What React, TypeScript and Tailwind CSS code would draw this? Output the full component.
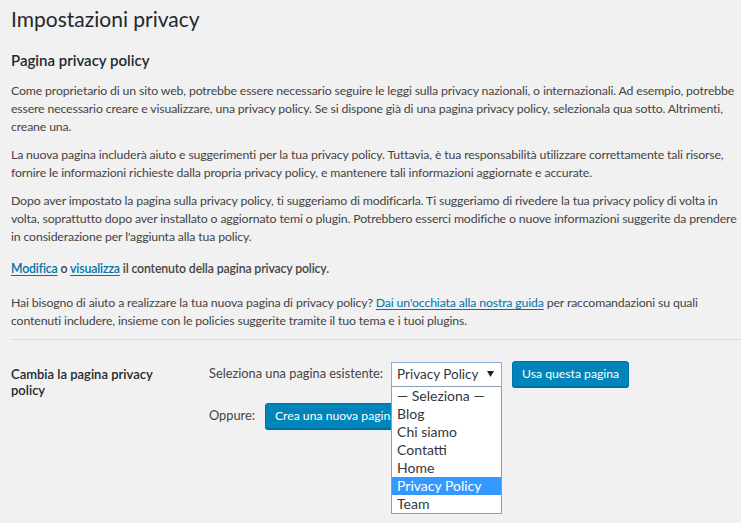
const OPTIONS = ["— Seleziona —", "Blog", "Chi siamo", "Contatti", "Home", "Privacy Policy", "Team"];

function Lines({ lines, className = "" }: { lines: React.ReactNode[]; className?: string }) {
  return (
    <p className={`leading-[18px] ${className}`}>
      {lines.map((l, i) => (
        <span key={i} className="block whitespace-nowrap">
          {l}
        </span>
      ))}
    </p>
  );
}

function Link({ children }: { children: React.ReactNode }) {
  return <a className="text-[#0073aa] underline underline-offset-2">{children}</a>;
}

function PageSelect() {
  return (
    <div className="relative">
      <div className="flex h-[25px] w-[111px] items-center justify-between border border-[#8eaed8] bg-white pl-[5px] pr-[7px] text-[13.5px] text-[#32373c]">
        <span>Privacy Policy</span>
        <svg width="7" height="6" viewBox="0 0 7 6">
          <path d="M0 0h7L3.5 6z" fill="#222" />
        </svg>
      </div>
      <ul className="absolute left-0 top-[24px] z-10 w-[111px] border border-[#8e9fb4] bg-white text-[14px] text-[#32373c]">
        {OPTIONS.map((o) => (
          <li
            key={o}
            className={`h-[18px] whitespace-nowrap pl-[5px] leading-[18px] ${o === "Privacy Policy" ? "bg-[#3399ff] text-white" : ""}`}
          >
            {o}
          </li>
        ))}
      </ul>
    </div>
  );
}

function Button({ children, className = "" }: { children: React.ReactNode; className?: string }) {
  return (
    <button
      type="button"
      className={`h-[26px] whitespace-nowrap rounded-[3px] border border-[#0073aa] bg-[#0085ba] px-[9px] text-[12.2px] leading-[22px] text-white shadow-[0_1px_0_#006799] ${className}`}
    >
      {children}
    </button>
  );
}

export default function App() {
  return (
    <div className="min-h-[523px] w-[741px] overflow-hidden bg-[#f1f1f1] pt-[4px] pl-[11px] font-['Lato','Noto_Sans',sans-serif] text-[12.3px] tracking-[-0.15px] text-[#444]">
      <h1 className="text-[21px] font-normal leading-[30px] tracking-normal text-[#23282d]">Impostazioni privacy</h1>
      <h2 className="mt-[16px] mb-[12px] text-[15px] font-semibold leading-[20px] tracking-normal text-[#23282d]">
        Pagina privacy policy
      </h2>
      <Lines
        className="mb-[10px]"
        lines={[
          "Come proprietario di un sito web, potrebbe essere necessario seguire le leggi sulla privacy nazionali, o internazionali. Ad esempio, potrebbe",
          "essere necessario creare e visualizzare, una privacy policy. Se si dispone già di una pagina privacy policy, selezionala qua sotto. Altrimenti,",
          "creane una.",
        ]}
      />
      <Lines
        className="mb-[10px]"
        lines={[
          "La nuova pagina includerà aiuto e suggerimenti per la tua privacy policy. Tuttavia, è tua responsabilità utilizzare correttamente tali risorse,",
          "fornire le informazioni richieste dalla propria privacy policy, e mantenere tali informazioni aggiornate e accurate.",
        ]}
      />
      <p className="leading-[17px]">
        <span className="block whitespace-nowrap leading-[18px]">
          Dopo aver impostato la pagina sulla privacy policy, ti suggeriamo di modificarla. Ti suggeriamo di rivedere la tua privacy policy di volta in
        </span>
        <span className="block whitespace-nowrap leading-[18px]">
          volta, soprattutto dopo aver installato o aggiornato temi o plugin. Potrebbero esserci modifiche o nuove informazioni suggerite da prendere
        </span>
        <span className="block whitespace-nowrap">in considerazione per l'aggiunta alla tua policy.</span>
      </p>
      <p className="mt-[15px] mb-[16px] font-semibold leading-[18px]">
        <Link>Modifica</Link> o <Link>visualizza</Link> il contenuto della pagina privacy policy.
      </p>
      <Lines
        lines={[
          <>
            Hai bisogno di aiuto a realizzare la tua nuova pagina di privacy policy? <Link>Dai un'occhiata alla nostra guida</Link> per raccomandazioni su quali
          </>,
          "contenuti includere, insieme con le policies suggerite tramite il tuo tema e i tuoi plugins.",
        ]}
      />
      <hr className="mt-[9px] border-t border-[#dddddd]" />
      <div className="mt-[21px] flex items-start tracking-normal">
        <div className="w-[198px] pt-[5px] text-[13px] font-semibold leading-[16px] text-[#23282d]">
          Cambia la pagina privacy
          <br />
          policy
        </div>
        <div className="flex flex-col gap-[16px]">
          <div className="flex items-center">
            <span className="mr-[8px] text-[12.8px] text-[#444]">Seleziona una pagina esistente:</span>
            <PageSelect />
            <Button className="ml-[10px]">Usa questa pagina</Button>
          </div>
          <div className="flex items-center">
            <span className="mr-[10px] text-[12.8px] text-[#444]">Oppure:</span>
            <Button>Crea una nuova pagina</Button>
          </div>
        </div>
      </div>
    </div>
  );
}
